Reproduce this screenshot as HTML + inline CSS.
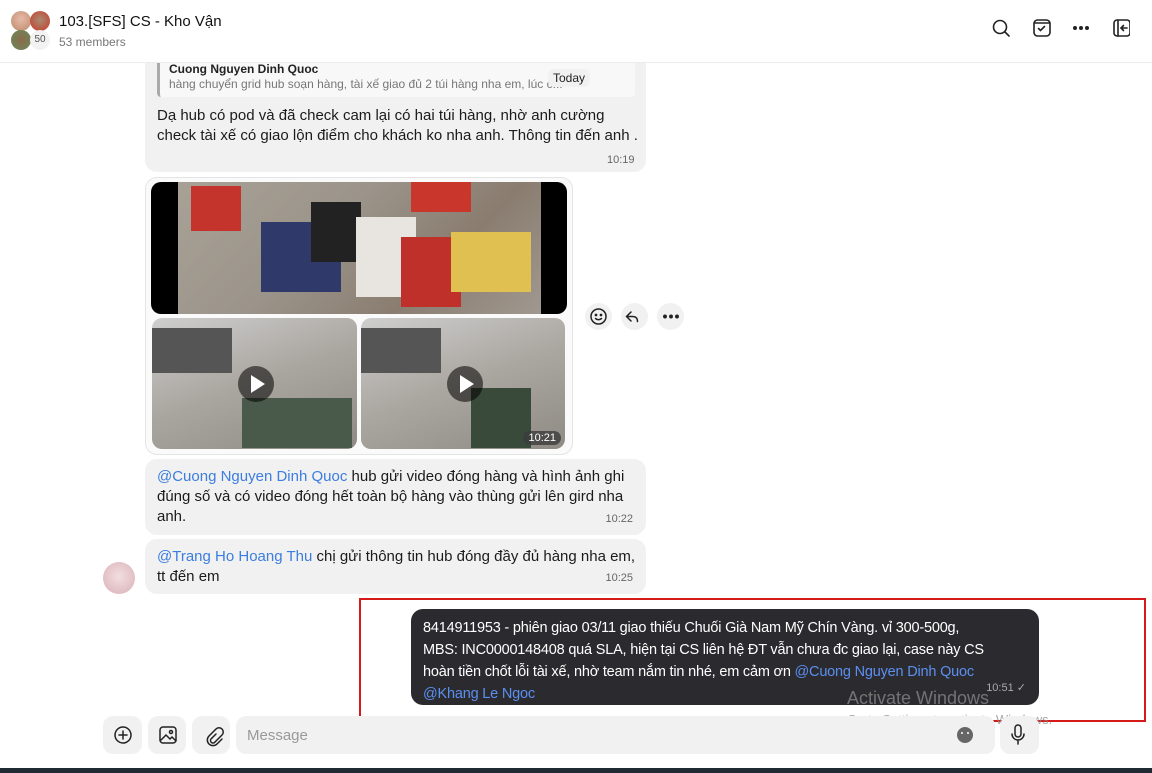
<!DOCTYPE html>
<html><head><meta charset="utf-8"><style>
*{margin:0;padding:0;box-sizing:border-box}
body{width:1152px;height:773px;overflow:hidden;background:#fff;font-family:"Liberation Sans","DejaVu Sans",sans-serif;position:relative;color:#1b1b1b}
.abs{position:absolute}
.hdr{left:0;top:0;width:1152px;height:63px;border-bottom:1px solid #ececec;background:#fff;z-index:5}
.top{z-index:6}
.b{position:absolute;background:#f1f1f1;border-radius:12px;font-size:15px;line-height:20px;padding:8px 12px}
.t{position:absolute;right:13px;font-size:11px;color:#666}
.m{color:#3b7de0}
.img{position:absolute;border-radius:10px;overflow:hidden}
.play{position:absolute;width:36px;height:36px;border-radius:50%;background:rgba(0,0,0,.55)}
.play:after{content:"";position:absolute;left:13px;top:9px;border-left:14px solid #fff;border-top:9px solid transparent;border-bottom:9px solid transparent}
.cb{position:absolute;width:27px;height:27px;border-radius:50%;background:#f1f1f1}
.bt{position:absolute;top:716px;height:38px;background:#f1f1f1;border-radius:10px}
</style></head><body>
<div class="abs hdr"></div>
<div class="abs top" style="left:11px;top:11px;width:20px;height:20px;border-radius:50%;background:radial-gradient(circle at 50% 40%,#e9b9a8,#b98a6a)"></div>
<div class="abs top" style="left:30px;top:11px;width:20px;height:20px;border-radius:50%;background:radial-gradient(circle at 50% 45%,#a88a70,#c83a2a)"></div>
<div class="abs top" style="left:11px;top:30px;width:20px;height:20px;border-radius:50%;background:radial-gradient(circle,#8a6a4a,#6a8a5a)"></div>
<div class="abs top" style="left:30px;top:30px;width:20px;height:20px;border-radius:50%;background:#f2f2f2;font-size:10px;color:#555;text-align:center;line-height:20px">50</div>
<div class="abs top" style="left:59px;top:13px;font-size:15px;color:#111">103.[SFS] CS - Kho Vận</div>
<div class="abs top" style="left:59px;top:35px;font-size:12px;color:#777">53 members</div>
<svg class="abs top" style="left:990px;top:17px" width="140" height="22" fill="none" stroke="#222" stroke-width="1.6" stroke-linecap="round">
<circle cx="10" cy="10" r="6.5"/><line x1="15" y1="15" x2="19" y2="19"/>
<rect x="44" y="3" width="16" height="16" rx="3.5"/><line x1="45" y1="6" x2="59" y2="6"/><path d="M48.5 11.5l2 2 4-4"/>
<circle cx="85" cy="11" r="1.2" fill="#222"/><circle cx="91" cy="11" r="1.2" fill="#222"/><circle cx="97" cy="11" r="1.2" fill="#222"/>
<rect x="124" y="3" width="16" height="16" rx="3"/><line x1="128" y1="3" x2="128" y2="19"/><path d="M137 11h-6m2.5-2.5L131 11l2.5 2.5"/>
</svg>

<div class="b" style="left:145px;top:40px;width:501px;height:132px"></div>
<div class="abs" style="left:157px;top:58px;width:478px;height:39px;background:#f8f8f8;border-left:3px solid #aaa;border-radius:4px;padding:4px 9px;font-size:12px;line-height:15px">
<div style="font-weight:bold;color:#222">Cuong Nguyen Dinh Quoc</div>
<div style="color:#777;white-space:nowrap;overflow:hidden">hàng chuyển grid hub soạn hàng, tài xế giao đủ 2 túi hàng nha em, lúc c...</div></div>
<div class="abs" style="left:548px;top:69px;background:#f1f1f1;border-radius:6px;font-size:12px;padding:2px 5px;color:#222">Today</div>
<div class="abs" style="left:157px;top:106px;width:485px;font-size:15px;line-height:20px">Dạ hub có pod và đã check cam lại có hai túi hàng, nhờ anh cường<br>check tài xế có giao lộn điểm cho khách ko nha anh. Thông tin đến anh .</div>
<div class="abs" style="left:607px;top:154px;font-size:11px;color:#666">10:19</div>

<div class="abs" style="left:145px;top:177px;width:428px;height:278px;border:1px solid #e4e4e4;border-radius:12px;background:#fafafa"></div>
<div class="img" style="left:151px;top:182px;width:416px;height:132px;background:#000">
<div class="abs" style="left:27px;top:0;width:363px;height:132px;background:linear-gradient(135deg,#a8a196 0%,#9b948a 40%,#8a7d70 70%,#a09890 100%)"></div>
<div class="abs" style="left:40px;top:4px;width:50px;height:45px;background:#c5342c"></div>
<div class="abs" style="left:110px;top:40px;width:80px;height:70px;background:#2f3a6a"></div>
<div class="abs" style="left:160px;top:20px;width:50px;height:60px;background:#222"></div>
<div class="abs" style="left:205px;top:35px;width:60px;height:80px;background:#e8e4e0"></div>
<div class="abs" style="left:250px;top:55px;width:60px;height:70px;background:#c0302a"></div>
<div class="abs" style="left:300px;top:50px;width:80px;height:60px;background:#e0c050"></div>
<div class="abs" style="left:260px;top:0;width:60px;height:30px;background:#c8362c"></div>
</div>
<div class="img" style="left:152px;top:318px;width:205px;height:131px;background:linear-gradient(160deg,#cfcfcf 0%,#a9a59f 50%,#8f8a84 100%)">
<div class="abs" style="left:0;top:10px;width:80px;height:45px;background:#555"></div>
<div class="abs" style="left:90px;top:80px;width:110px;height:50px;background:#4a5a4a"></div>
<div class="play" style="left:86px;top:48px"></div></div>
<div class="img" style="left:361px;top:318px;width:204px;height:131px;background:linear-gradient(160deg,#cfcfcf 0%,#aaa6a0 50%,#8f8a84 100%)">
<div class="abs" style="left:0;top:10px;width:80px;height:45px;background:#555"></div>
<div class="abs" style="left:110px;top:70px;width:60px;height:60px;background:#3a4a3a"></div>
<div class="play" style="left:86px;top:48px"></div>
<div class="abs" style="right:4px;bottom:4px;background:rgba(60,60,60,.8);color:#fff;font-size:11px;border-radius:8px;padding:1px 5px">10:21</div></div>
<div class="cb" style="left:585px;top:303px"></div><div class="cb" style="left:621px;top:303px"></div><div class="cb" style="left:657px;top:303px"></div>
<svg class="abs" style="left:585px;top:303px" width="100" height="27" fill="none" stroke="#222" stroke-width="1.5" stroke-linecap="round">
<circle cx="13.5" cy="13.5" r="7.5"/><circle cx="11" cy="12" r=".6" fill="#222"/><circle cx="16" cy="12" r=".6" fill="#222"/><path d="M10.5 15.5q3 2.5 6 0"/>
<path d="M46 9l-4.5 4.5L46 18M41.5 13.5h6q5 0 5 5"/>
<circle cx="80" cy="13.5" r="1.2" fill="#222"/><circle cx="86" cy="13.5" r="1.2" fill="#222"/><circle cx="92" cy="13.5" r="1.2" fill="#222"/>
</svg>

<div class="b" style="left:145px;top:459px;width:501px;height:76px"><span class="m">@Cuong Nguyen Dinh Quoc</span> hub gửi video đóng hàng và hình ảnh ghi<br>đúng số và có video đóng hết toàn bộ hàng vào thùng gửi lên gird nha<br>anh.<span class="t" style="bottom:6px">10:22</span></div>
<div class="b" style="left:145px;top:539px;width:501px;height:55px;white-space:nowrap"><span class="m">@Trang Ho Hoang Thu</span> chị gửi thông tin hub đóng đầy đủ hàng nha em,<br>tt đến em<span class="t" style="bottom:6px">10:25</span></div>
<div class="abs" style="left:103px;top:562px;width:32px;height:32px;border-radius:50%;background:radial-gradient(circle at 50% 45%,#f3dede,#d8b0b8)"></div>

<div class="b" style="left:411px;top:609px;width:628px;height:96px;background:#2b2b2f;color:#fff;padding:8px 12px;line-height:22px;font-size:14.5px;white-space:nowrap;letter-spacing:-0.2px">8414911953 - phiên giao 03/11 giao thiếu Chuối Già Nam Mỹ Chín Vàng. vỉ 300-500g,<br>MBS: INC0000148408 quá SLA, hiện tại CS liên hệ ĐT vẫn chưa đc giao lại, case này CS<br>hoàn tiền chốt lỗi tài xế, nhờ team nắm tin nhé, em cảm ơn <span style="color:#5b8ff0">@Cuong Nguyen Dinh Quoc</span><br><span style="color:#5b8ff0">@Khang Le Ngoc</span><span class="t" style="bottom:6px;color:#aaa;letter-spacing:0">10:51 ✓</span></div>
<div class="abs" style="left:359px;top:598px;width:787px;height:124px;border:2px solid #d51a1a"></div>
<div class="abs" style="left:847px;top:688px;font-size:18px;color:rgba(140,140,140,.75)">Activate Windows</div>
<div class="abs" style="left:847px;top:712px;font-size:13px;color:rgba(140,140,140,.75)">Go to Settings to activate Windows.</div>

<div class="bt" style="left:103px;width:39px"></div><div class="bt" style="left:148px;width:38px"></div><div class="bt" style="left:192px;width:38px"></div>
<div class="bt" style="left:236px;width:759px"></div><div class="bt" style="left:1000px;width:39px"></div>
<div class="abs" style="left:247px;top:727px;font-size:15px;color:#999">Message</div>
<svg class="abs" style="left:103px;top:716px" width="940" height="38" fill="none" stroke="#222" stroke-width="1.5" stroke-linecap="round">
<circle cx="20" cy="19" r="8"/><path d="M20 15v8M16 19h8"/>
<rect x="57" y="11" width="16" height="16" rx="3"/><path d="M58 24l5-5 4 4 2-2 4 4"/><circle cx="68" cy="16" r="1.5"/>
<path d="M113 18l-5 5a2.5 2.5 0 0 0 4 3l7-7a4 4 0 0 0-6-6l-7 7a5.5 5.5 0 0 0 8 8l5-5"/>
<circle cx="862" cy="19" r="8" fill="#666" stroke="none"/><circle cx="859" cy="17" r="1" fill="#fff" stroke="none"/><circle cx="865" cy="17" r="1" fill="#fff" stroke="none"/>
<rect x="912" y="9" width="6" height="12" rx="3"/><path d="M909 18a6 6 0 0 0 12 0M915 24v4"/>
</svg>
<div class="abs" style="left:0;top:768px;width:1152px;height:5px;background:#1f2a33"></div>
</body></html>
